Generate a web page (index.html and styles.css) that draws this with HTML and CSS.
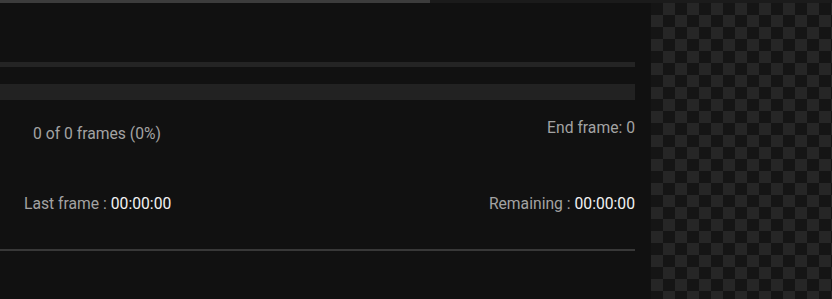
FILE: index.html
```html
<!DOCTYPE html>
<html>
<head>
<meta charset="utf-8">
<link rel="stylesheet" href="styles.css">
</head>
<body>
<div class="progress"><div class="progress-fill" style="width:430px"></div></div>
<div class="main">
  <div class="panel">
    <div class="bar-thin"></div>
    <div class="bar-thick"></div>
    <div class="row row-frames">
      <span class="frames">0 of 0 frames (0%)</span>
      <span class="end">End frame: 0</span>
    </div>
    <div class="row row-times">
      <span class="last">Last frame : <b class="val">00:00:00</b></span>
      <span class="remaining">Remaining : <b class="val">00:00:00</b></span>
    </div>
    <div class="divider"></div>
  </div>
  <div class="checker"></div>
</div>
</body>
</html>
```
FILE: styles.css
```css
html, body {
  margin: 0;
  padding: 0;
  background: #111111;
  height: 100%;
  overflow: hidden;
  font-family: Roboto, "Liberation Sans", sans-serif;
}
.progress {
  height: 3px;
  background: #1b1b1b;
}
.progress-fill {
  height: 100%;
  background: #3c3c3c;
}
.main {
  display: flex;
  gap: 16px;
  height: 296px;
}
.panel {
  width: 635px;
  flex: none;
  display: flex;
  flex-direction: column;
  padding-top: 59px;
  box-sizing: border-box;
}
.bar-thin {
  height: 5px;
  background: #242424;
}
.bar-thick {
  height: 16px;
  margin-top: 17px;
  background: #222222;
}
.row {
  display: flex;
  justify-content: space-between;
  align-items: flex-start;
  font-size: 15.7px;
  line-height: 19px;
  color: #a3a3a3;
}
.row-frames {
  margin-top: 18px;
}
.frames {
  margin-top: 6px;
  padding-left: 33px;
}
.row-times {
  margin-top: 51px;
}
.last {
  padding-left: 24px;
}
.val {
  font-weight: normal;
  color: #f2f2f2;
}
.divider {
  margin-top: 36px;
  height: 2px;
  background: #383838;
}
.checker {
  flex: 1;
  background: repeating-conic-gradient(#262626 0 25%, #151515 0 50%) 0 0 / 24px 24px;
}
```
